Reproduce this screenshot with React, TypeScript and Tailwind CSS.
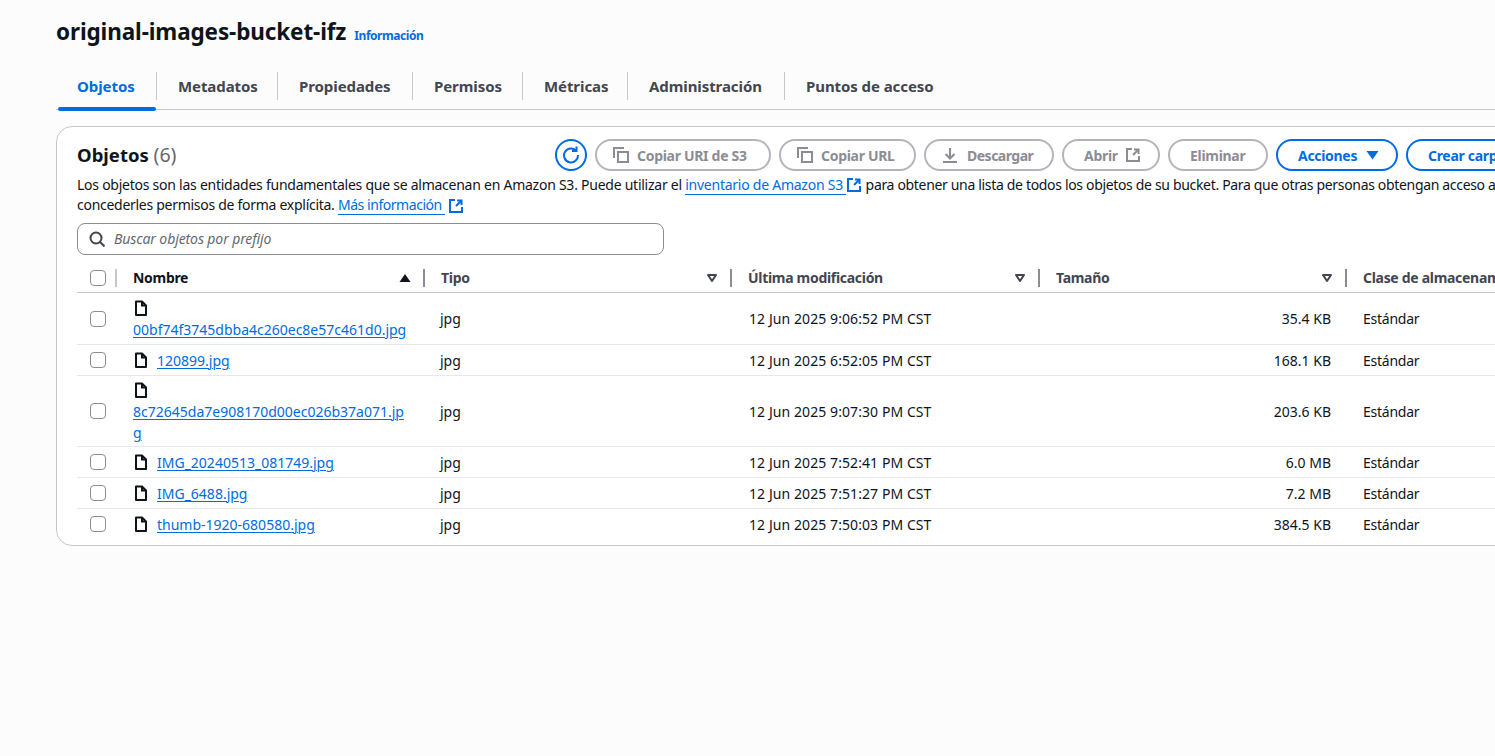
const tabs = [
  { nombre: "Objetos", ancho: "w-[101px]", pad: "pl-[21px]" },
  { nombre: "Metadatos", ancho: "w-[121px]", pad: "pl-[21px]" },
  { nombre: "Propiedades", ancho: "w-[135px]", pad: "pl-[21px]" },
  { nombre: "Permisos", ancho: "w-[110px]", pad: "pl-[21px]" },
  { nombre: "Métricas", ancho: "w-[105px]", pad: "pl-[21px]" },
  { nombre: "Administración", ancho: "w-[157px]", pad: "pl-[21px]" },
  { nombre: "Puntos de acceso", ancho: "w-[170px]", pad: "pl-[21px]" },
];

const filas = [
  { nombre: "00bf74f3745dbba4c260ec8e57c461d0.jpg", fecha: "12 Jun 2025 9:06:52 PM CST", tam: "35.4 KB", alto: "h-[52px]", largo: true },
  { nombre: "120899.jpg", fecha: "12 Jun 2025 6:52:05 PM CST", tam: "168.1 KB", alto: "h-[31px]", largo: false },
  { nombre: "8c72645da7e908170d00ec026b37a071.jpg", fecha: "12 Jun 2025 9:07:30 PM CST", tam: "203.6 KB", alto: "h-[71px]", largo: true },
  { nombre: "IMG_20240513_081749.jpg", fecha: "12 Jun 2025 7:52:41 PM CST", tam: "6.0 MB", alto: "h-[31px]", largo: false },
  { nombre: "IMG_6488.jpg", fecha: "12 Jun 2025 7:51:27 PM CST", tam: "7.2 MB", alto: "h-[31px]", largo: false },
  { nombre: "thumb-1920-680580.jpg", fecha: "12 Jun 2025 7:50:03 PM CST", tam: "384.5 KB", alto: "h-[31px]", largo: false },
];

const columnas = "grid grid-cols-[40px_308px_307px_308px_307px_300px]";

function IconoCopiar() {
  return (
    <svg width="16" height="16" viewBox="0 0 16 16" fill="none" stroke="currentColor" strokeWidth="2" className="shrink-0">
      <path d="M5 5h10v10H5z" />
      <path d="M1 11V1h10" />
    </svg>
  );
}

function IconoExterno({ className }: { className?: string }) {
  return (
    <svg width="16" height="16" viewBox="0 0 16 16" fill="none" stroke="currentColor" strokeWidth="2" className={className}>
      <path d="M7 2H2v12h12V9" />
      <path d="M9 2.500h4.500V7" />
      <path d="M13.500 2.500 8 8" />
    </svg>
  );
}

function IconoArchivo() {
  return (
    <svg width="16" height="16" viewBox="0 0 16 16" fill="none" stroke="#0f141a" strokeWidth="2" className="block shrink-0">
      <path d="M3 1.500h6l4 4V15H3z" strokeLinejoin="round" />
      <path d="M9 1.500v4h4" />
    </svg>
  );
}

function Caja() {
  return <div className="h-4 w-4 rounded-[4px] border border-[#8c8c94] bg-white" />;
}

function Encabezado({ texto, fuerte, orden }: { texto: string; fuerte?: boolean; orden?: boolean }) {
  return (
    <div className="flex h-[30px] items-center justify-between pl-4">
      <span className={`text-[14px] font-bold tracking-[-0.3px] whitespace-nowrap ${fuerte ? "text-[#0f141a]" : "text-[#424650]"}`}>{texto}</span>
      {texto !== "Clase de almacenamiento" && (
        <div className="flex items-center">
          <svg width="12" height="10" viewBox="0 0 12 10" className="mr-[12px]">
            {orden ? (
              <path d="M6 1 11.500 9H.5z" fill="#0f141a" />
            ) : (
              <path d="M2 2h8L6 8z" fill="none" stroke="#424650" strokeWidth="2" strokeLinejoin="round" />
            )}
          </svg>
          <div className="h-[18px] w-[2px] bg-[#8c8c94]" />
        </div>
      )}
    </div>
  );
}

function Boton({ children, activo, className }: { children: React.ReactNode; activo?: boolean; className: string }) {
  return (
    <div
      className={`flex h-8 shrink-0 items-center rounded-full border-2 bg-white text-[14px] font-bold tracking-[-0.3px] whitespace-nowrap ${
        activo ? "border-[#006ce0] text-[#006ce0]" : "border-[#b4b4bb] text-[#8c8c94]"
      } ${className}`}
    >
      {children}
    </div>
  );
}

export default function App() {
  return (
    <div className="h-[756px] w-[1495px] overflow-hidden bg-[#fcfcfc] pt-[14px] pl-[56px] font-['Noto_Sans','Open_Sans',sans-serif] text-[#0f141a]">
      {/* TITULO */}
      <div className="flex h-9 items-center gap-2">
        <h1 className="text-[22.5px] leading-9 font-bold tracking-[-0.12px]">original-images-bucket-ifz</h1>
        <span className="mt-[7px] text-[12px] font-bold tracking-[-0.45px] text-[#006ce0]">Información</span>
      </div>

      {/* PESTAÑAS */}
      <div className="mt-[14px] flex h-[46px] w-[1439px] border-b border-[#c6c6cd]">
        {tabs.map((tab, i) => (
          <div key={tab.nombre} className={`relative flex h-[46px] items-center justify-between pb-[2px] ${tab.ancho} ${tab.pad}`}>
            <span className={`text-[15px] font-bold tracking-[-0.08px] whitespace-nowrap ${i === 0 ? "text-[#006ce0]" : "text-[#424650]"}`}>{tab.nombre}</span>
            {i < tabs.length - 1 && <div className="h-7 w-px bg-[#c6c6cd]" />}
            {i === 0 && <div className="absolute right-[1px] bottom-[-1px] left-[2px] h-1 rounded-full bg-[#006ce0]" />}
          </div>
        ))}
      </div>

      {/* TARJETA */}
      <div className="mt-4 h-[420px] w-[1500px] rounded-[16px] border border-[#c6c6cd] bg-white pt-3 pl-[20px]">
        <div className="flex h-8 items-center">
          <h2 className="w-[478px] shrink-0 text-[18.5px] font-bold">
            Objetos <span className="text-[19.500px] font-normal text-[#656871]">(6)</span>
          </h2>
          <div className="flex h-8 w-8 shrink-0 items-center justify-center rounded-full border-2 border-[#006ce0] text-[#006ce0]">
            <svg width="18" height="18" viewBox="0 0 18 18" fill="none" stroke="currentColor" strokeWidth="2">
              <path d="M14 4.500A7 7 0 1 0 16 9" />
              <path d="M14.500 0.500v4.500H10" />
            </svg>
          </div>
          <div className="ml-2 flex gap-2">
            <Boton className="w-[176px] gap-[8px] pl-4"><IconoCopiar />Copiar URI de S3</Boton>
            <Boton className="w-[137px] gap-[8px] pl-4"><IconoCopiar />Copiar URL</Boton>
            <Boton className="w-[130px] gap-[9px] pl-4">
              <svg width="16" height="16" viewBox="0 0 16 16" fill="none" stroke="currentColor" strokeWidth="2">
                <path d="M8 1v10M3.500 7 8 11.500 12.500 7M1 15h14" />
              </svg>
              <span className="tracking-[-0.5px]">Descargar</span>
            </Boton>
            <Boton className="w-[98px] gap-[7px] pl-[20px]">Abrir<IconoExterno /></Boton>
            <Boton className="w-[100px] pl-[20px]">Eliminar</Boton>
            <Boton activo className="w-[122px] gap-[9px] pl-[20px]">
              Acciones
              <svg width="13" height="10" viewBox="0 0 13 10"><path d="M0.500 1h12L6.500 9.500z" fill="currentColor" /></svg>
            </Boton>
            <Boton activo className="w-[140px] pl-[20px]">Crear carpeta</Boton>
          </div>
        </div>

        <p className="mt-1 w-[1420px] text-[14px] leading-[20px] tracking-[-0.25px] text-[#0f141a]">
          <span className="whitespace-nowrap">
            Los objetos son las entidades fundamentales que se almacenan en Amazon S3. Puede utilizar el{" "}
            <span className="border-b border-[#006ce0] text-[#006ce0]">inventario de Amazon S3 </span>
            <IconoExterno className="mb-[2px] inline h-[16px] w-[16px] text-[#006ce0]" />
            <span className="tracking-[-0.33px]"> para obtener una lista de todos los objetos de su bucket. Para que otras personas obtengan acceso a</span>
          </span>
          <br />
          <span className="tracking-[-0.28px]">concederles permisos de forma explícita. </span>
          <span className="border-b border-[#006ce0] tracking-[-0.45px] text-[#006ce0]">Más información </span>
          <IconoExterno className="mb-[2px] ml-[3px] inline h-[16px] w-[16px] text-[#006ce0]" />
        </p>

        <div className="mt-[7px] flex h-8 w-[587px] items-center rounded-lg border border-[#8c8c94] bg-white pl-[11px]">
          <svg width="16" height="16" viewBox="0 0 16 16" fill="none" stroke="#424650" strokeWidth="2">
            <circle cx="7" cy="7" r="5.500" />
            <path d="m11 11 4.500 4.500" />
          </svg>
          <span className="ml-[9px] text-[14px] tracking-[-0.1px] text-[#656871] italic">Buscar objetos por prefijo</span>
        </div>

        {/* TABLA */}
        <div className="mt-2 w-[1418px]">
          <div className={`${columnas} h-[30px] border-b border-[#c6c6cd]`}>
            <div className="flex h-[30px] items-center justify-between pl-[13px]">
              <Caja />
              <div className="h-[18px] w-[2px] bg-[#c6c6cd]" />
            </div>
            <Encabezado texto="Nombre" fuerte orden />
            <Encabezado texto="Tipo" />
            <Encabezado texto="Última modificación" />
            <Encabezado texto="Tamaño" />
            <Encabezado texto="Clase de almacenamiento" />
          </div>

          {filas.map((f, i) => (
            <div
              key={f.nombre}
              className={`${columnas} ${f.alto} items-center border-b pt-[1px] text-[14px] ${i < filas.length - 1 ? "border-[#e8e8ec]" : "border-transparent"}`}
            >
              <div className="pl-[13px]"><Caja /></div>
              <div className={`pr-[18px] pl-4 ${f.largo ? "block" : "flex items-center gap-2"}`}>
                <div className={f.largo ? "flex h-[21px] items-center" : ""}>
                  <IconoArchivo />
                </div>
                <span className="block leading-[21px] [overflow-wrap:anywhere] text-[#006ce0] underline decoration-1 underline-offset-2">
                  {f.nombre}
                </span>
              </div>
              <div className="pl-[15px]">jpg</div>
              <div className="pl-[17px] tracking-[0.08px]">{f.fecha}</div>
              <div className="pr-[16px] text-right">{f.tam}</div>
              <div className="pl-4 tracking-[-0.25px]">Estándar</div>
            </div>
          ))}
        </div>
      </div>
    </div>
  );
}
